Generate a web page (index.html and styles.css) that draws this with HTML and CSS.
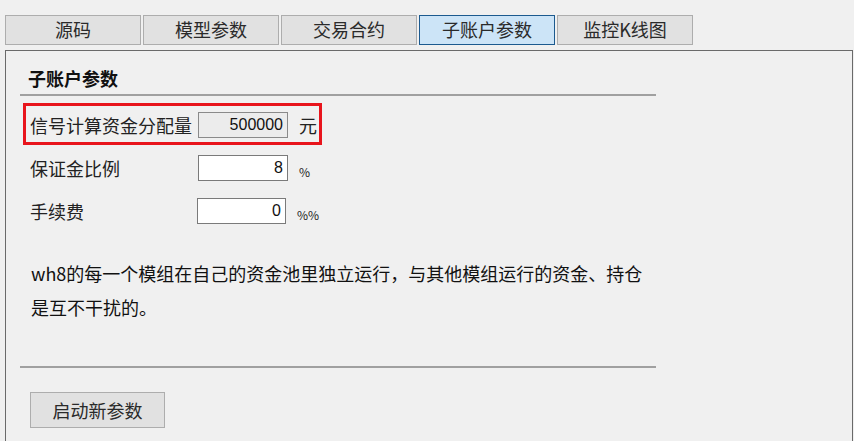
FILE: index.html
```html
<!DOCTYPE html>
<html lang="zh-CN">
<head>
<meta charset="utf-8">
<title>子账户参数</title>
<link rel="stylesheet" href="styles.css">
</head>
<body>
<div class="app">
  <div class="tabs">
    <div class="tab">源码</div>
    <div class="tab">模型参数</div>
    <div class="tab">交易合约</div>
    <div class="tab active">子账户参数</div>
    <div class="tab">监控K线图</div>
  </div>
  <div class="panel">
    <div class="title">子账户参数</div>
    <div class="sep"></div>
    <div class="form">
      <div class="row highlight">
        <span class="label">信号计算资金分配量</span>
        <span class="input disabled">500000</span>
        <span class="unit">元</span>
      </div>
      <div class="row">
        <span class="label">保证金比例</span>
        <span class="input">8</span>
        <span class="unit small">%</span>
      </div>
      <div class="row">
        <span class="label">手续费</span>
        <span class="input">0</span>
        <span class="unit small">%%</span>
      </div>
    </div>
    <p class="note">wh8的每一个模组在自己的资金池里独立运行，与其他模组运行的资金、持仓是互不干扰的。</p>
    <div class="sep sep2"></div>
    <button class="btn" type="button">启动新参数</button>
  </div>
</div>
</body>
</html>
```
FILE: styles.css
```css
html, body {
  margin: 0;
  padding: 0;
  background: #f0f0f0;
  overflow: hidden;
}
body {
  font-family: "Noto Sans CJK SC", "Liberation Sans", sans-serif;
  color: #1e1e1e;
}
.app {
  padding: 15px 0 0 5px;
}
.tabs {
  display: flex;
  gap: 2px;
}
.tab {
  box-sizing: border-box;
  width: 136px;
  height: 30px;
  background: #e1e1e1;
  border: 1px solid #adadad;
  font-size: 18px;
  line-height: 27px;
  text-align: center;
  color: #2a2a2a;
}
.tab.active {
  background: #cce4f7;
  border-color: #1c5a8f;
}
.panel {
  box-sizing: border-box;
  margin-top: 5px;
  width: 848px;
  height: 391px;
  border: 1px solid #6a6a6a;
  border-bottom: none;
  padding: 15px 0 0 14px;
}
.title {
  font-size: 18px;
  font-weight: bold;
  line-height: 24px;
  padding-left: 8px;
  color: #111;
}
.sep {
  width: 636px;
  height: 2px;
  background: #a0a0a0;
  margin-top: 4px;
}
.form {
  display: flex;
  flex-direction: column;
  gap: 1px;
  margin-top: 7px;
  margin-left: 3px;
}
.row {
  box-sizing: border-box;
  width: 299px;
  height: 42px;
  border: 3px solid transparent;
  padding: 2px 0 0 4px;
  display: flex;
  align-items: center;
}
.row.highlight {
  border-color: #e8141c;
}
.label {
  width: 168px;
  font-size: 18px;
  color: #222;
}
.input {
  box-sizing: border-box;
  width: 90px;
  height: 26px;
  border: 1px solid #7a7a7a;
  background: #fff;
  font-family: "Liberation Sans", sans-serif;
  font-size: 16px;
  line-height: 24px;
  text-align: right;
  padding-right: 4px;
  color: #111;
}
.input.disabled {
  background: #ececec;
  border-color: #8a8a8a;
}
.unit {
  margin-left: 11px;
  font-size: 18px;
  color: #222;
}
.unit.small {
  font-size: 12px;
  padding-top: 6px;
}
.note {
  margin: 25px 0 0 11px;
  width: 620px;
  font-size: 18px;
  line-height: 34px;
  color: #111;
}
.sep2 {
  margin-top: 42px;
}
.btn {
  display: block;
  box-sizing: border-box;
  margin: 24px 0 0 10px;
  width: 135px;
  height: 36px;
  background: #e1e1e1;
  border: 1px solid #adadad;
  border-radius: 0;
  font-family: "Noto Sans CJK SC", sans-serif;
  font-size: 18px;
  color: #2a2a2a;
  padding: 0;
}
```
